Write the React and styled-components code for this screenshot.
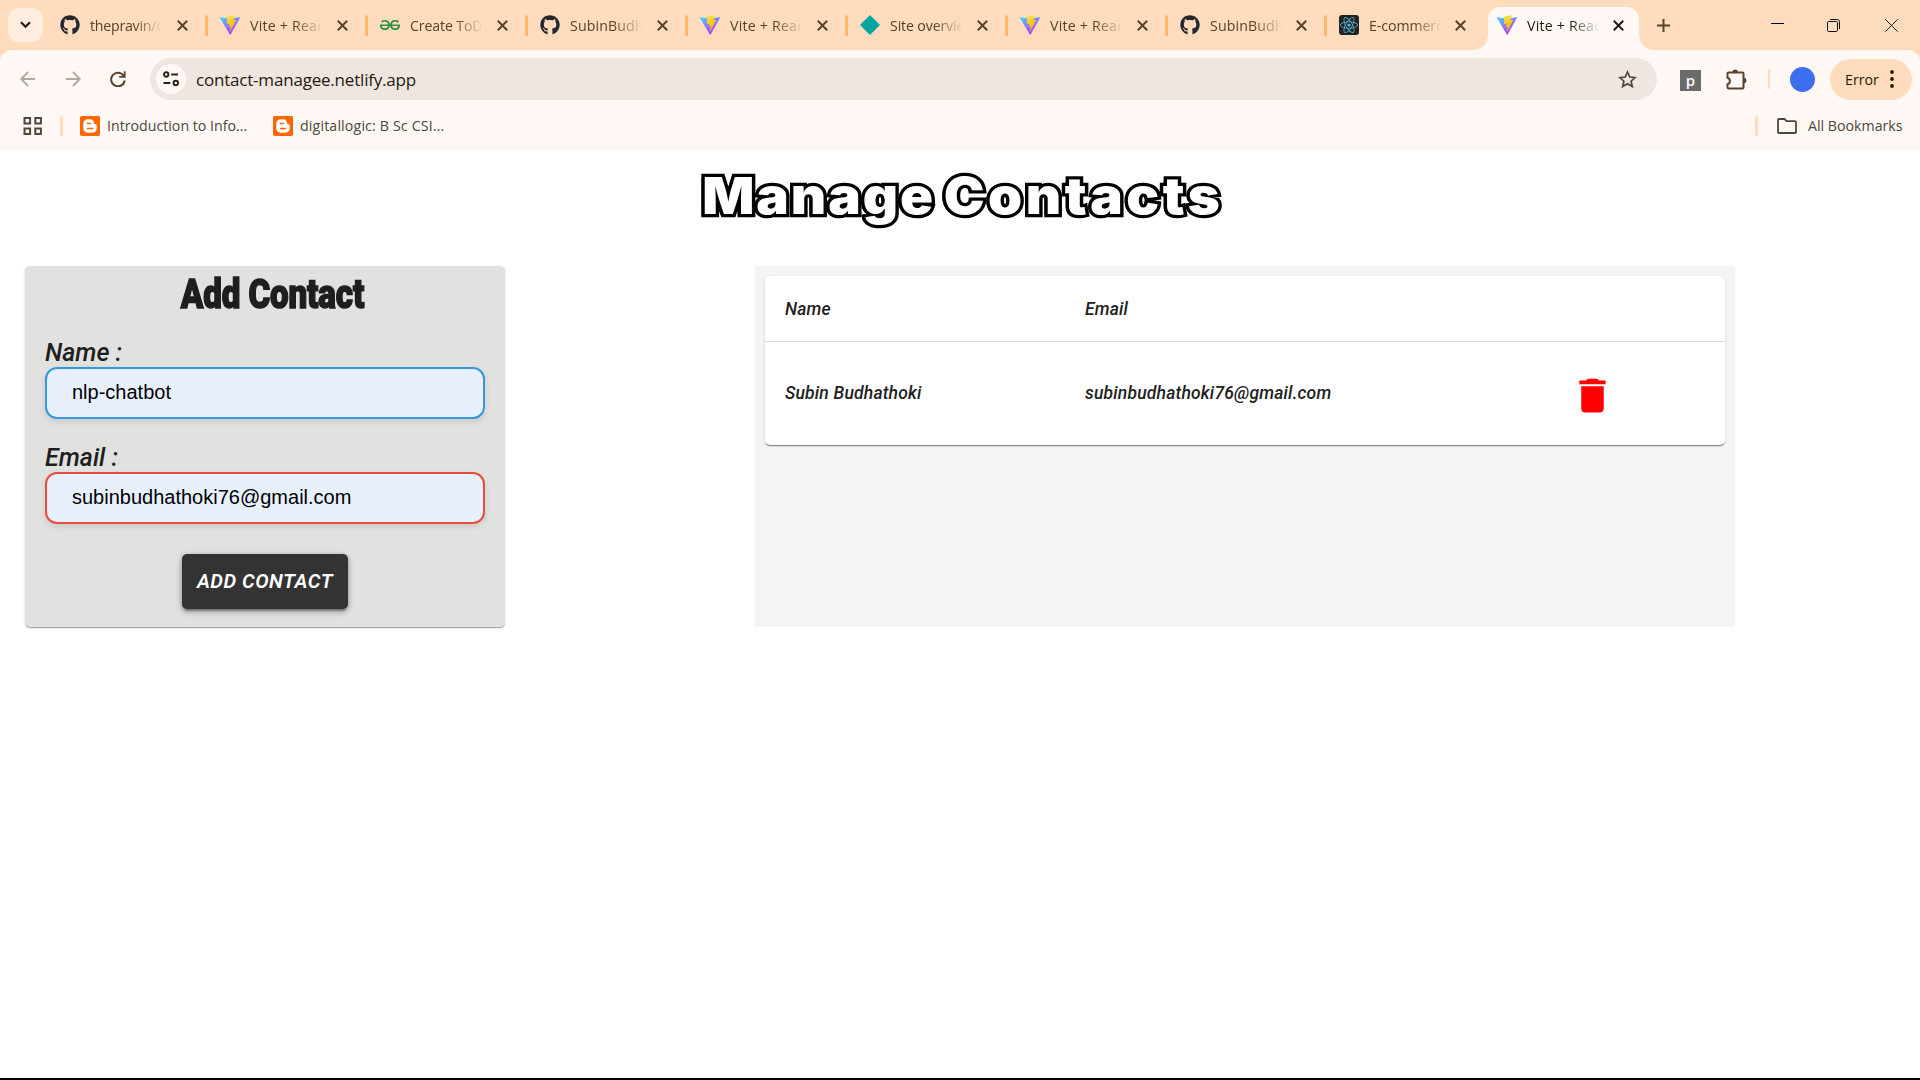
import React from "react";
import styled, { createGlobalStyle, css } from "styled-components";
import { FaGithub, FaReact } from "react-icons/fa";
import { SiGeeksforgeeks, SiBlogger } from "react-icons/si";
import { MdDelete } from "react-icons/md";

const uiFont = `"Segoe UI", "Open Sans", "Noto Sans", sans-serif`;

const GlobalStyle = createGlobalStyle`
  * { box-sizing: border-box; }
  html, body { margin: 0; padding: 0; background: #fff; overflow: hidden; }
  svg { display: block; flex: none; }
`;

const Screen = styled.div`
  width: 1920px;
  height: 1080px;
  display: flex;
  flex-direction: column;
  border-bottom: 2px solid #000;
  background: #fff;
  overflow: hidden;
`;

/* ---------- browser chrome ---------- */

const Chrome = styled.header`
  flex: none;
  height: 151px;
  background: #ffdcbd;
  font-family: ${uiFont};
`;

const TabStrip = styled.div`
  height: 50px;
  display: flex;
  align-items: flex-start;
  padding-left: 8px;
`;

const TabSearch = styled.div`
  flex: none;
  width: 35px;
  height: 34px;
  margin: 8px 5px 0 0;
  border-radius: 11px;
  background: #ffede0;
  display: flex;
  align-items: center;
  justify-content: center;
`;

const Tab = styled.div`
  flex: none;
  width: ${(p) => p.$w || 160}px;
  height: 50px;
  display: flex;
  align-items: center;
  padding-left: 12px;
  color: #574227;
  ${(p) =>
    p.$active &&
    css`
      position: relative;
      width: 151px;
      height: 43px;
      margin: 7px 0 0 2px;
      padding: 0 0 7px 9px;
      border-radius: 12px 12px 0 0;
      background: #fff8f5;
      color: #221a11;
      &::before,
      &::after {
        content: "";
        position: absolute;
        bottom: 0;
        width: 14px;
        height: 14px;
      }
      &::before {
        right: 100%;
        background: radial-gradient(circle at 0 0, transparent 13.5px, #fff8f5 14px);
      }
      &::after {
        left: 100%;
        background: radial-gradient(circle at 100% 0, transparent 13.5px, #fff8f5 14px);
      }
    `}
`;

const TabTitle = styled.span`
  width: 73px;
  margin-left: 10px;
  padding-top: 1px;
  font-size: 14.2px;
  line-height: 20px;
  white-space: nowrap;
  overflow: hidden;
  letter-spacing: ${(p) => p.$spacing || 0}px;
  mask-image: linear-gradient(90deg, #000 60%, transparent 100%);
`;

const CloseSlot = styled.span`
  margin-left: ${(p) => p.$gap || 14}px;
`;

const TabDivider = styled.span`
  width: 3px;
  height: 21px;
  margin-left: auto;
  border-radius: 2px;
  background: #ffb867;
`;

const WindowControls = styled.div`
  flex: 1;
  height: 50px;
  display: flex;
  align-items: center;
  padding-left: 17px;
`;

const MinimizeIcon = styled.svg`
  margin: 0 43px 0 100px;
`;

const CloseWindowIcon = styled.svg`
  margin-left: 45px;
`;

const Toolbar = styled.div`
  height: 101px;
  border-radius: 12px 12px 0 0;
  background: #fff8f5;
`;

const NavRow = styled.div`
  height: 57px;
  display: flex;
  align-items: center;
  padding: 1px 8px 0 20px;
`;

const NavIcon = styled.span`
  width: 45px;
  flex: none;
`;

const Omnibox = styled.div`
  width: 1507px;
  height: 42px;
  margin-left: -5px;
  border-radius: 21px;
  background: #efe6e1;
  display: flex;
  align-items: center;
  padding: 0 20px 0 6px;
`;

const SiteInfo = styled.span`
  width: 30px;
  height: 30px;
  border-radius: 50%;
  background: #fff8f5;
  display: flex;
  align-items: center;
  justify-content: center;
`;

const Url = styled.span`
  flex: 1;
  margin-left: 10px;
  padding-top: 1px;
  font-size: 17px;
  letter-spacing: -0.2px;
  color: #221a11;
`;

const ExtensionBadge = styled.span`
  width: 21px;
  height: 21px;
  margin: 2px 25px 0 23px;
  background: #6b6b6b;
  color: #fff;
  font: 600 15px/20px ${uiFont};
  text-align: center;
`;

const SoftDivider = styled.span`
  flex: none;
  width: ${(p) => p.$w || 3}px;
  height: 20px;
  margin-left: ${(p) => p.$gap || 0}px;
  border-radius: 2px;
  background: #ffdcbd;
`;

const Avatar = styled.span`
  width: 25px;
  height: 25px;
  margin-left: 20px;
  border-radius: 50%;
  background: #3c6ef0;
`;

const ErrorPill = styled.div`
  width: 82px;
  height: 41px;
  margin-left: 15px;
  border-radius: 21px;
  background: #ffdcbd;
  color: #2c1700;
  font-size: 14.2px;
  display: flex;
  align-items: center;
  justify-content: space-between;
  padding: 0 18px 0 15px;
`;

const BookmarkRow = styled.div`
  height: 38px;
  display: flex;
  align-items: center;
  padding: 0 18px 1px 23px;
  font-size: 14.2px;
  color: #50453a;
`;

const BloggerMark = styled.span`
  flex: none;
  width: 20px;
  height: 20px;
  border-radius: 4px;
  background: #fff;
  margin-left: ${(p) => p.$gap || 0}px;
`;

const BookmarkLabel = styled.span`
  width: ${(p) => p.$w}px;
  margin-left: ${(p) => p.$gap || 7}px;
  white-space: nowrap;
  letter-spacing: ${(p) => p.$spacing || 0}px;
`;

const Spacer = styled.span`
  flex: 1;
`;

/* ---------- page ---------- */

const Title = styled.h1`
  margin: 10px 0 0;
  height: 70px;
  display: flex;
  justify-content: center;
  gap: 10px;
  padding-left: 2px;
  font: 900 51px/70px Inter, Roboto, sans-serif;
  color: #fff;
  -webkit-text-stroke: 6.5px #000;
  paint-order: stroke fill;
  text-shadow: -1px 0 0 #000, -2px 0 0 #000, -3px 0.5px 0 #000;
  transform: scaleX(1.07);
`;

const TitleWord = styled.span`
  letter-spacing: ${(p) => p.$spacing}px;
  margin-right: -${(p) => p.$spacing}px;
`;

const Columns = styled.main`
  display: flex;
  align-items: flex-start;
  gap: 250px;
  margin: 35px 0 0 25px;
`;

const FormCard = styled.form`
  width: 480px;
  height: 361px;
  padding: 0 20px;
  border-radius: 5px;
  background: #e1e1df;
  color: #1e1e1e;
  box-shadow: 0 2px 1px -1px rgba(0, 0, 0, 0.2), 0 1px 1px rgba(0, 0, 0, 0.14),
    0 1px 3px rgba(0, 0, 0, 0.12);
  display: flex;
  flex-direction: column;
`;

const FormHeading = styled.h2`
  margin: 0 0 0 15px;
  height: 72px;
  text-align: center;
  font: 900 41px/56px Impact, Roboto, sans-serif;
  letter-spacing: -0.2px;
  white-space: nowrap;
  transform: scaleX(0.81);
  -webkit-text-stroke: 1.5px #1e1e1e;
`;

const Label = styled.label`
  height: 29px;
  font: italic 500 25px/29px Roboto, sans-serif;
`;

const Field = styled.input`
  width: 440px;
  height: 52px;
  margin: 0 0 24px;
  padding: 0 25px 2px;
  border: 2px solid ${(p) => p.$tone};
  border-radius: 12px;
  outline: none;
  background: #e8f0fe;
  color: #000;
  font: 20px "Liberation Sans", Arial, sans-serif;
  box-shadow: 0 3px 6px rgba(0, 0, 0, 0.1);
`;

const SubmitButton = styled.button`
  align-self: center;
  width: 166px;
  height: 55px;
  margin-top: 6px;
  padding: 0 0 2px;
  border: 0;
  border-radius: 5px;
  background: #333;
  color: #fff;
  font: italic 600 20px Roboto, sans-serif;
  letter-spacing: 0.5px;
  white-space: nowrap;
  box-shadow: 0 4px 1px -2px rgba(0, 0, 0, 0.2), 0 2px 3px rgba(0, 0, 0, 0.14),
    0 1px 6px rgba(0, 0, 0, 0.22), 0 4px 6px rgba(0, 0, 0, 0.14);
`;

const ListPanel = styled.section`
  width: 980px;
  height: 361px;
  padding: 10px;
  background: #f3f4f6;
`;

const TableCard = styled.div`
  height: 169px;
  border-radius: 5px;
  background: #fff;
  box-shadow: 0 2px 1px -1px rgba(0, 0, 0, 0.3), 0 1px 1px rgba(0, 0, 0, 0.18),
    0 1px 3px rgba(0, 0, 0, 0.12);
`;

const Row = styled.div`
  display: grid;
  grid-template-columns: 300px 1fr 155px;
  align-items: center;
  height: ${(p) => p.$h}px;
  padding-left: 20px;
  border-bottom: ${(p) => (p.$line ? "1px solid #e0e0e0" : "none")};
  color: #212121;
  font: italic 500 17.5px/26px Roboto, sans-serif;
  letter-spacing: 0.19px;
`;

const DeleteSlot = styled.span`
  padding-top: 4px;
`;

/* ---------- drawings ---------- */

const ViteIcon = () => (
  <svg width="20" height="20" viewBox="0 0 32 32">
    <defs>
      <linearGradient id="viteBlue" x1="0" y1="0" x2="0.6" y2="1">
        <stop offset="0" stopColor="#41d1ff" />
        <stop offset="1" stopColor="#bd34fe" />
      </linearGradient>
      <linearGradient id="viteBolt" x1="0.4" y1="0" x2="0.6" y2="1">
        <stop offset="0" stopColor="#ffea83" />
        <stop offset="0.1" stopColor="#ffdd35" />
        <stop offset="1" stopColor="#ffa800" />
      </linearGradient>
    </defs>
    <path
      fill="url(#viteBlue)"
      d="M31.9 4.6 17 31.2c-.3.6-1.1.6-1.4 0L.1 4.6c-.3-.6.2-1.300.9-1.200l15.100 2.700h.2l14.700-2.700c.7-.1 1.200.6.9 1.200z"
    />
    <path
      fill="url(#viteBolt)"
      d="m23.100.02-11 2.150a.4.4 0 0 0-.3.380l-.7 11.500c0 .27.240.480.5.420l3.070-.7c.290-.07.550.180.490.470l-.9 4.460c-.06.300.220.560.510.470l1.900-.58c.290-.09.570.170.510.480l-1.450 7.010c-.09.440.490.680.740.300l.160-.25 8.980-17.900c.150-.3-.11-.64-.44-.58l-3.160.6c-.3.06-.55-.21-.46-.5l2.060-7.150c.08-.300-.17-.57-.51-.58z"
    />
  </svg>
);

const NetlifyIcon = () => (
  <svg width="20" height="20" viewBox="0 0 20 20">
    <path d="M10 1 19 10 10 19 1 10Z" fill="#05a6a1" stroke="#05a6a1" strokeWidth="1.5" strokeLinejoin="round" />
  </svg>
);

const ReactTile = styled.span`
  width: 20px;
  height: 20px;
  border-radius: 3px;
  background: #222;
  display: flex;
  align-items: center;
  justify-content: center;
`;

const Cross = ({ color = "#57422a" }) => (
  <svg width="11" height="11" viewBox="0 0 11 11" stroke={color} strokeWidth="2">
    <path d="M.8.8 10.200 10.200M10.200.8.8 10.200" />
  </svg>
);

const BackArrow = () => (
  <svg width="16" height="16" viewBox="0 0 16 16" fill="none" stroke="#b3a8a0" strokeWidth="1.8">
    <path d="M15 8H1.500M8 1 1.200 8 8 15" />
  </svg>
);

const ForwardArrow = () => (
  <svg width="16" height="16" viewBox="0 0 16 16" fill="none" stroke="#b3a8a0" strokeWidth="1.8">
    <path d="M1 8h13.500M8 1l6.800 7L8 15" />
  </svg>
);

const Reload = () => (
  <svg width="16" height="16" viewBox="0 0 16 16">
    <path d="M13.800 5A6.800 6.800 0 1 0 14.700 9.500" fill="none" stroke="#57422a" strokeWidth="2" />
    <path d="M15.600.3v6.400H9.200V4.900h4.600V.3z" fill="#57422a" />
  </svg>
);

const Tune = () => (
  <svg width="16" height="16" viewBox="0 0 16 16" fill="none" stroke="#2a2018" strokeWidth="1.9">
    <circle cx="3.2" cy="3.5" r="2.2" />
    <path d="M8.200 3.500H15M.5 12h6.800" />
    <circle cx="12.8" cy="12" r="2.2" />
  </svg>
);

const Star = () => (
  <svg width="19" height="19" viewBox="0 0 19 19" fill="none" stroke="#50453a" strokeWidth="1.7">
    <path d="m9.500 2 2.300 5 5.300.6-4 3.600 1.200 5.400-4.800-2.900-4.800 2.900 1.200-5.400-4-3.600L7.200 7z" />
  </svg>
);

const Puzzle = () => (
  <svg width="21" height="21" viewBox="0 0 21 21">
    <path
      d="M2.500 3.500h14q1 0 1 1v14q0 1-1 1h-14q-1 0-1-1v-3.300a3.400 3.400 0 0 0 0-6.500V4.500q0-1 1-1z"
      fill="none"
      stroke="#57422a"
      strokeWidth="2"
    />
    <path d="M6.500 3.300a2.700 2.700 0 0 1 5.400 0zM17.700 8.800a2.700 2.700 0 0 1 0 5.400z" fill="#57422a" />
  </svg>
);

const Dots = () => (
  <svg width="4" height="18" viewBox="0 0 4 18" fill="#2c1700">
    <circle cx="2" cy="2" r="1.9" />
    <circle cx="2" cy="9" r="1.9" />
    <circle cx="2" cy="16" r="1.9" />
  </svg>
);

const AppsGrid = () => (
  <svg width="19" height="18" viewBox="0 0 19 18" fill="none" stroke="#50453a" strokeWidth="2">
    <path d="M1.500 1h5.600v5.600H1.500zM12.300 1h5.600v5.600h-5.600zM1.500 11.400h5.600V17H1.500zM12.300 11.400h5.600V17h-5.600z" />
  </svg>
);

const Folder = () => (
  <svg width="20" height="16" viewBox="0 0 20 16" fill="none" stroke="#50453a" strokeWidth="1.8">
    <path d="M2 1h5.500l2 2.200H18q1 0 1 1V14q0 1-1 1H2q-1 0-1-1V2q0-1 1-1z" />
  </svg>
);

const Controls = () => (
  <WindowControls>
    <svg width="15" height="15" viewBox="0 0 15 15" stroke="#57422a" strokeWidth="2">
      <path d="M7.500 1v13M1 7.500h13" />
    </svg>
    <MinimizeIcon width="13" height="4" viewBox="0 0 13 4">
      <path d="M0 .5h13" stroke="#000" />
    </MinimizeIcon>
    <svg width="13" height="13" viewBox="0 0 13 13" fill="none" stroke="#111">
      <rect x=".5" y="2.5" width="10" height="10" rx="1.2" />
      <path d="M3 .5h7.500a2 2 0 0 1 2 2V10" />
    </svg>
    <CloseWindowIcon width="13" height="13" viewBox="0 0 13 13" stroke="#222">
      <path d="m.3.3 12.400 12.400M12.700.3.3 12.700" />
    </CloseWindowIcon>
  </WindowControls>
);

const GithubIcon = () => <FaGithub size={20} color="#24292f" />;
const GeeksIcon = () => <SiGeeksforgeeks size={20} color="#2f8d46" />;
const ReactIcon = () => (
  <ReactTile>
    <FaReact size={18} color="#53b9d6" />
  </ReactTile>
);

const tabs = [
  { icon: GithubIcon, title: "thepravin/c", spacing: -0.25 },
  { icon: ViteIcon, title: "Vite + Reac", spacing: 0.2 },
  { icon: GeeksIcon, title: "Create ToD", spacing: -0.15 },
  { icon: GithubIcon, title: "SubinBudh", spacing: 0.1 },
  { icon: ViteIcon, title: "Vite + Reac", spacing: 0.2 },
  { icon: NetlifyIcon, title: "Site overvie", spacing: -0.15 },
  { icon: ViteIcon, title: "Vite + Reac", spacing: 0.2 },
  { icon: GithubIcon, title: "SubinBudh", spacing: 0.1, width: 159, gap: 13 },
  { icon: ReactIcon, title: "E-commerc", spacing: -0.1, width: 159, gap: 13 },
];

export default function App() {
  return (
    <Screen>
      <GlobalStyle />
      <Chrome>
        <TabStrip>
          <TabSearch>
            <svg width="11" height="8" viewBox="0 0 11 8" fill="none" stroke="#221a11" strokeWidth="2.2">
              <path d="m1 1.300 4.500 4.500L10 1.300" />
            </svg>
          </TabSearch>
          {tabs.map(({ icon: Icon, title, spacing, width, gap }, i) => (
            <Tab key={i} $w={width}>
              <Icon />
              <TabTitle $spacing={spacing}>{title}</TabTitle>
              <CloseSlot $gap={gap}>
                <Cross />
              </CloseSlot>
              {i < tabs.length - 1 && <TabDivider />}
            </Tab>
          ))}
          <Tab $active>
            <ViteIcon />
            <TabTitle $spacing={0.2}>Vite + Reac</TabTitle>
            <CloseSlot $gap={13}>
              <Cross color="#221a11" />
            </CloseSlot>
          </Tab>
          <Controls />
        </TabStrip>
        <Toolbar>
          <NavRow>
            <NavIcon><BackArrow /></NavIcon>
            <NavIcon><ForwardArrow /></NavIcon>
            <NavIcon><Reload /></NavIcon>
            <Omnibox>
              <SiteInfo><Tune /></SiteInfo>
              <Url>contact-managee.netlify.app</Url>
              <Star />
            </Omnibox>
            <ExtensionBadge>p</ExtensionBadge>
            <Puzzle />
            <Spacer />
            <SoftDivider $w={2} />
            <Avatar />
            <ErrorPill>
              Error
              <Dots />
            </ErrorPill>
          </NavRow>
          <BookmarkRow>
            <AppsGrid />
            <SoftDivider $gap={18} />
            <BloggerMark $gap={17}><SiBlogger size={20} color="#ff6600" /></BloggerMark>
            <BookmarkLabel $w={166}>Introduction to Info...</BookmarkLabel>
            <BloggerMark><SiBlogger size={20} color="#ff6600" /></BloggerMark>
            <BookmarkLabel $w={150} $spacing={0.15}>digitallogic: B Sc CSI...</BookmarkLabel>
            <Spacer />
            <SoftDivider />
            <BookmarkLabel $w={20} $gap={19}><Folder /></BookmarkLabel>
            <BookmarkLabel $w={94} $gap={11}>All Bookmarks</BookmarkLabel>
          </BookmarkRow>
        </Toolbar>
      </Chrome>

      <Title>
        <TitleWord $spacing={1.8}>Manage</TitleWord>
        <TitleWord $spacing={3.3}>Contacts</TitleWord>
      </Title>

      <Columns>
        <FormCard>
          <FormHeading>Add Contact</FormHeading>
          <Label>Name :</Label>
          <Field $tone="#3498db" defaultValue="nlp-chatbot" />
          <Label>Email :</Label>
          <Field $tone="#e74c3c" defaultValue="subinbudhathoki76@gmail.com" />
          <SubmitButton type="button">ADD CONTACT</SubmitButton>
        </FormCard>
        <ListPanel>
          <TableCard>
            <Row $h={66} $line>
              <span>Name</span>
              <span>Email</span>
            </Row>
            <Row $h={102}>
              <span>Subin Budhathoki</span>
              <span>subinbudhathoki76@gmail.com</span>
              <DeleteSlot>
                <MdDelete size={45} color="#f00" />
              </DeleteSlot>
            </Row>
          </TableCard>
        </ListPanel>
      </Columns>
    </Screen>
  );
}
